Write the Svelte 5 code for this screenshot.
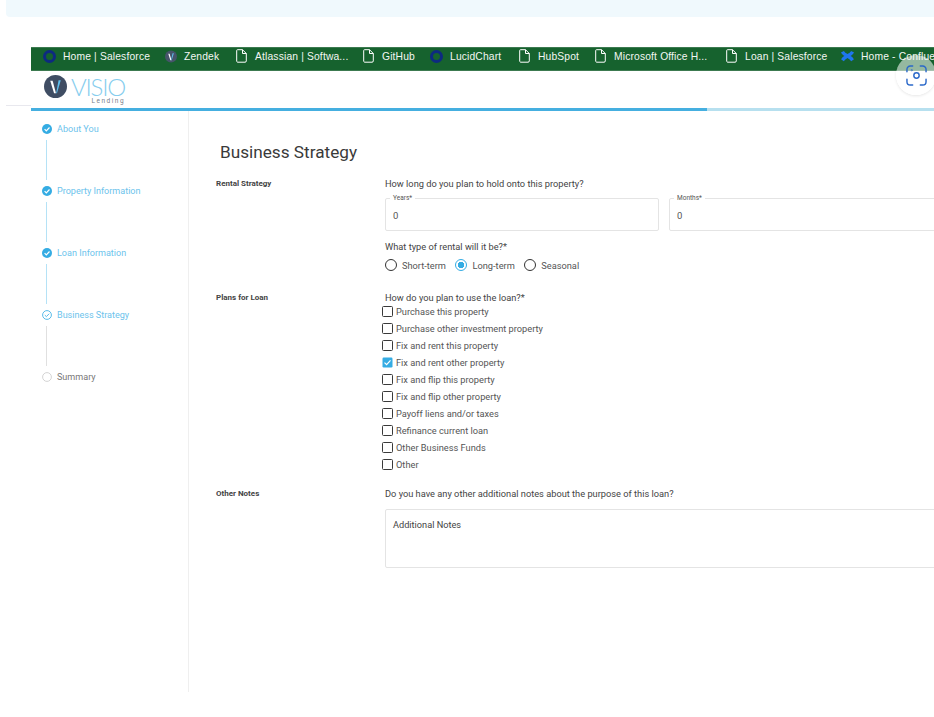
<script>
  const bookmarks = [
    { label: 'Home | Salesforce', icon: 'ring', w: 122 },
    { label: 'Zendek', icon: 'visio', w: 71 },
    { label: 'Atlassian | Softwa...', icon: 'doc', w: 127 },
    { label: 'GitHub', icon: 'doc', w: 67 },
    { label: 'LucidChart', icon: 'ring', w: 89 },
    { label: 'HubSpot', icon: 'doc', w: 76 },
    { label: 'Microsoft Office H...', icon: 'doc', w: 131 },
    { label: 'Loan | Salesforce', icon: 'doc', w: 115 },
    { label: 'Home - Confluence', icon: 'conf', w: 110 }
  ];
  const steps = [
    { label: 'About You', state: 'done' },
    { label: 'Property Information', state: 'done' },
    { label: 'Loan Information', state: 'done' },
    { label: 'Business Strategy', state: 'current' },
    { label: 'Summary', state: 'todo' }
  ];
  const rentals = [
    { label: 'Short-term', on: false },
    { label: 'Long-term', on: true },
    { label: 'Seasonal', on: false }
  ];
  const plans = [
    'Purchase this property',
    'Purchase other investment property',
    'Fix and rent this property',
    'Fix and rent other property',
    'Fix and flip this property',
    'Fix and flip other property',
    'Payoff liens and/or taxes',
    'Refinance current loan',
    'Other Business Funds',
    'Other'
  ];
</script>

<div class="page">
  <div class="strip"></div>
  <div class="shell-row">
    <div class="gutter"><div class="gutter-line"></div></div>
    <div class="shell">
      <nav class="bookmarks">
        {#each bookmarks as b}
          <div class="bm" style="width: {b.w}px">
            {#if b.icon === 'ring'}
              <span class="ring"></span>
            {:else if b.icon === 'visio'}
              <svg class="bm-ico" width="12" height="13" viewBox="0 0 13 13"><circle cx="6.5" cy="6.5" r="6.5" fill="#46546a"/><path d="M3.6 3.500 5.800 10.500H7L5 3.500z" fill="#fff"/><path d="M9.600 3 7.200 10.500H6.600L8.200 3z" fill="#5fc0ee"/></svg>
            {:else if b.icon === 'doc'}
              <svg class="bm-ico doc" width="11" height="14" viewBox="0 0 11 14" fill="none" stroke="#fff" stroke-width="1"><path d="M1.500.7h5l3.800 3.800v7.400a1.300 1.300 0 0 1-1.300 1.300H1.500A1.300 1.300 0 0 1 .7 12V1.500A.8.8 0 0 1 1.500.7z"/><path d="M6.500.7v3.800h3.800"/></svg>
            {:else}
              <svg class="bm-ico" width="13" height="14" viewBox="0 0 14 14" fill="none" stroke="#1f76ee" stroke-width="3.600"><path d="M1.500 2.500C4 7 9 6.500 12.500 11.500"/><path d="M12.500 2.500C10 7 5 6.500 1.500 11.500"/></svg>
            {/if}
            <span class="bm-text">{b.label}</span>
          </div>
        {/each}
      </nav>

      <header class="brand">
        <svg width="23" height="23" viewBox="0 0 24 24"><circle cx="12" cy="12" r="12" fill="#3f4d63"/><path d="M6.500 6 10.500 19h2L9 6z" fill="#fff"/><path d="M17.500 5.500 13.500 19h-.8L15.200 5.500z" fill="#5fc0ee"/></svg>
        <div class="wordmark">
          <span class="visio">VISIO</span>
          <span class="lending">Lending</span>
        </div>
      </header>

      <div class="progress"><div class="progress-fill"></div></div>

      <div class="body">
        <aside class="side">
          {#each steps as s, i}
            <div class="step {s.state}">
              <span class="dot">
                {#if s.state === 'done'}
                  <svg width="10" height="10" viewBox="0 0 10 10"><circle cx="5" cy="5" r="5" fill="#35ace3"/><path d="M2.600 5.100 4.300 6.800 7.500 3.500" fill="none" stroke="#fff" stroke-width="1.200"/></svg>
                {:else if s.state === 'current'}
                  <svg width="10" height="10" viewBox="0 0 10 10"><circle cx="5" cy="5" r="4.400" fill="none" stroke="#45b3e6" stroke-width="0.900"/><path d="M2.800 5.100 4.400 6.600 7.200 3.700" fill="none" stroke="#45b3e6" stroke-width="0.900"/></svg>
                {:else}
                  <svg width="10" height="10" viewBox="0 0 10 10"><circle cx="5" cy="5" r="4.400" fill="none" stroke="#cfcfcf" stroke-width="0.900"/></svg>
                {/if}
              </span>
              <span class="step-label">{s.label}</span>
            </div>
            {#if i < steps.length - 1}
              <div class="link" class:grey={s.state === 'current'}></div>
            {/if}
          {/each}
        </aside>

        <main class="content">
          <h1>Business Strategy</h1>

          <section class="row rental">
            <div class="row-label">Rental Strategy</div>
            <div class="row-body">
              <p class="q">How long do you plan to hold onto this property?</p>
              <div class="fields">
                <div class="field years"><span class="legend">Years*</span><span class="val">0</span></div>
                <div class="field months"><span class="legend">Months*</span><span class="val">0</span></div>
              </div>
              <p class="q q2">What type of rental will it be?*</p>
              <div class="radios">
                {#each rentals as r}
                  <div class="radio" class:on={r.on}>
                    <span class="radio-mark"></span>
                    <span class="opt">{r.label}</span>
                  </div>
                {/each}
              </div>
            </div>
          </section>

          <section class="row plans">
            <div class="row-label">Plans for Loan</div>
            <div class="row-body">
              <p class="q">How do you plan to use the loan?*</p>
              <div class="checks">
                {#each plans as p, i}
                  <div class="check">
                    {#if i === 3}
                      <svg class="box" width="11" height="11" viewBox="0 0 11 11"><rect width="10" height="10" x="0.500" y="0.500" rx="1.200" fill="#35ace3"/><path d="M2.500 5.600 4.600 7.700 8.500 3.400" fill="none" stroke="#fff" stroke-width="1.200"/></svg>
                    {:else}
                      <span class="box empty"></span>
                    {/if}
                    <span class="opt">{p}</span>
                  </div>
                {/each}
              </div>
            </div>
          </section>

          <section class="row notes">
            <div class="row-label">Other Notes</div>
            <div class="row-body">
              <p class="q">Do you have any other additional notes about the purpose of this loan?</p>
              <div class="notes-box">Additional Notes</div>
            </div>
          </section>
        </main>
      </div>
    </div>
  </div>

  <div class="lens">
    <svg width="21" height="21" viewBox="0 0 22 22" fill="none" stroke="#2a68c9" stroke-width="1.500" stroke-linecap="round">
      <path d="M1 7V4.500A3.500 3.500 0 0 1 4.500 1H7"/>
      <path d="M15 1h2.500A3.500 3.500 0 0 1 21 4.500V7"/>
      <path d="M21 15v2.500a3.500 3.500 0 0 1-3.500 3.500H15"/>
      <path d="M7 21H4.500A3.500 3.500 0 0 1 1 17.500V15"/>
      <circle cx="11" cy="11" r="2.800"/>
      <circle cx="6" cy="5.500" r="0.300"/>
    </svg>
  </div>
</div>

<style>
  :global(body) {
    margin: 0;
    background: #fff;
    overflow: hidden;
  }
  .page {
    position: relative;
    width: 934px;
    height: 717px;
    overflow: hidden;
    font-family: Roboto, "Liberation Sans", sans-serif;
    color: #444;
  }
  .strip {
    height: 17px;
    margin-left: 6px;
    background: #f0f9fd;
    border-bottom-left-radius: 4px;
  }
  .shell-row {
    display: flex;
    margin-top: 30px;
  }
  .gutter {
    width: 31px;
    flex: none;
    padding: 58px 0 0 6px;
    box-sizing: border-box;
  }
  .gutter-line {
    height: 1px;
    background: #e8e8ee;
  }
  .shell {
    flex: none;
    width: 903px;
    overflow: hidden;
  }
  .bookmarks {
    display: flex;
    align-items: center;
    height: 24px;
    padding: 0 0 6px 12px;
    box-sizing: border-box;
    background: #16622e;
    border-top: 1px solid #3c7a50;
    border-bottom: 1px solid #3c7a50;
    white-space: nowrap;
  }
  .bm {
    display: flex;
    align-items: center;
    gap: 7px;
    flex: none;
  }
  .ring {
    width: 13px;
    height: 13px;
    box-sizing: border-box;
    border-radius: 50%;
    border: 3px solid #0d2a80;
    flex: none;
  }
  .bm-ico { flex: none; display: block; }
  .doc { margin-right: 1px; }
  .bm-text {
    font-family: "Liberation Sans", Arial, sans-serif;
    font-size: 10.300px;
    color: #f3f6f3;
    letter-spacing: 0.150px;
  }
  .brand {
    display: flex;
    align-items: flex-start;
    gap: 4px;
    height: 37px;
    padding: 4px 0 0 13px;
    box-sizing: border-box;
  }
  .wordmark {
    display: flex;
    flex-direction: column;
    align-items: flex-end;
  }
  .visio {
    font-family: Lato, "Open Sans", sans-serif;
    font-weight: 300;
    font-size: 24px;
    line-height: 23px;
    letter-spacing: -1.200px;
    color: #86cdee;
  }
  .lending {
    font-size: 6.500px;
    line-height: 7px;
    letter-spacing: 1.500px;
    color: #77808a;
  }
  .progress {
    height: 3px;
    background: #b7e0ef;
  }
  .progress-fill {
    width: 676px;
    height: 100%;
    background: #45afe0;
  }
  .body {
    display: flex;
    height: 581px;
  }
  .side {
    flex: none;
    width: 158px;
    box-sizing: border-box;
    border-right: 1px solid #efefef;
    padding: 12px 0 0 11px;
  }
  .step {
    display: flex;
    align-items: center;
    gap: 5px;
    height: 11px;
  }
  .dot {
    display: block;
    width: 10px;
    height: 10px;
  }
  .dot svg { display: block; }
  .step-label {
    font-size: 9.050px;
    color: #6cc3ec;
    white-space: nowrap;
  }
  .todo .step-label { color: #777; }
  .link {
    width: 1px;
    height: 40px;
    margin: 6px 0 5px 4px;
    background: #b5e2f6;
  }
  .link.grey { background: #e0e0e0; }
  .content {
    flex: 1;
    min-width: 0;
    padding-left: 27px;
  }
  h1 {
    margin: 30px 0 0 4px;
    font-size: 17.200px;
    line-height: 22px;
    font-weight: 400;
    color: #3a3a3a;
  }
  .row {
    display: flex;
  }
  .rental { margin-top: 15px; }
  .plans { margin-top: 20px; }
  .notes { margin-top: 15px; }
  .row-label {
    flex: none;
    width: 169px;
    font-size: 8px;
    font-weight: 700;
    line-height: 12px;
    color: #444;
  }
  .row-body {
    flex: none;
    width: 560px;
  }
  .q {
    margin: 0;
    font-size: 9.260px;
    line-height: 12px;
    color: #444;
    white-space: nowrap;
  }
  .q2 { margin-top: 10px; }
  .fields {
    display: flex;
    gap: 10px;
    margin-top: 8px;
  }
  .field {
    position: relative;
    flex: none;
    height: 33px;
    box-sizing: border-box;
    border: 1px solid #e4e4e4;
    border-radius: 2px;
    display: flex;
    align-items: center;
    padding-left: 7px;
  }
  .years { width: 274px; }
  .months { width: 275px; }
  .legend {
    position: absolute;
    left: 4px;
    top: -4px;
    padding: 0 3px;
    background: #fff;
    font-size: 6.500px;
    line-height: 7px;
    color: #555;
  }
  .val {
    font-size: 9.500px;
    color: #555;
    padding-top: 1px;
  }
  .radios {
    display: flex;
    gap: 9.500px;
    margin-top: 5px;
    height: 14px;
    align-items: center;
  }
  .radio {
    display: flex;
    align-items: center;
    gap: 5px;
  }
  .radio-mark {
    width: 12px;
    height: 12px;
    box-sizing: border-box;
    border: 1.600px solid #333;
    border-radius: 50%;
    flex: none;
  }
  .radio.on .radio-mark {
    border-color: #35ace3;
    background: radial-gradient(circle, #35ace3 0 3px, #fff 3.500px);
  }
  .opt {
    font-size: 9.250px;
    color: #555;
    white-space: nowrap;
  }
  .checks {
    display: flex;
    flex-direction: column;
    margin-top: -1px;
    margin-left: -3px;
  }
  .check {
    display: flex;
    align-items: center;
    gap: 3px;
    height: 17px;
  }
  .box {
    display: block;
    width: 11px;
    height: 11px;
    flex: none;
  }
  .box.empty {
    box-sizing: border-box;
    border: 1.500px solid #3a3a3a;
    border-radius: 1.500px;
  }
  .notes-box {
    margin-top: 9px;
    height: 59px;
    width: 560px;
    box-sizing: border-box;
    border: 1px solid #e4e4e4;
    border-radius: 2px;
    padding: 9px 7px;
    font-size: 9.200px;
    line-height: 11px;
    color: #444;
  }
  .lens {
    position: absolute;
    left: 896px;
    top: 55px;
    width: 40px;
    height: 40px;
    border-radius: 50%;
    background: rgba(255, 255, 255, 0.55);
    box-shadow: 0 1px 3px rgba(0, 0, 0, 0.1);
    display: flex;
    align-items: center;
    justify-content: center;
  }
  .lens::before {
    content: "";
    position: absolute;
    left: 0;
    right: 0;
    top: 16px;
    bottom: 0;
    border-radius: 0 0 20px 20px;
    background: #fff;
  }
  .lens svg { position: relative; }
</style>
